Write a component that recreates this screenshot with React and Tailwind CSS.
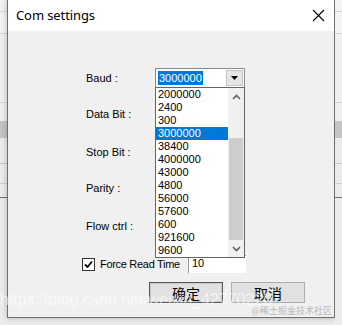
import React from "react";

const items = ["2000000","2400","300","3000000","38400","4000000","43000","4800","56000","57600","600","921600","9600"];

function Strip({ lines }) {
  return (
    <div className="w-[7px] h-full flex flex-col bg-[#ececec]">
      {lines.map((l, i) => (
        <div key={i} style={{ height: l.h }} className={l.c} />
      ))}
    </div>
  );
}

const leftLines = [
  { h: 11, c: "bg-[#f3f3f3]" },
  { h: 1, c: "bg-[#d6d6d6]" },
  { h: 21, c: "bg-[#f3f3f3]" },
  { h: 1, c: "bg-[#d6d6d6]" },
  { h: 68, c: "bg-[#f0f0f0]" },
  { h: 1, c: "bg-[#d4d4d4]" },
  { h: 18, c: "bg-[#efefef]" },
  { h: 17, c: "bg-[#c4c4c4]" },
  { h: 25, c: "bg-[#ebebeb]" },
  { h: 1, c: "bg-[#c8c8c8]" },
  { h: 19, c: "bg-[#ebebeb]" },
  { h: 1, c: "bg-[#cfcfcf]" },
  { h: 13, c: "bg-[#ebebeb]" },
  { h: 1, c: "bg-[#6e6e6e]" },
  { h: 127, c: "bg-[#ececec]" },
];

function Label({ children }) {
  return (
    <span>
      {children}
      <span className="ml-[3px]">:</span>
    </span>
  );
}

export default function App() {
  return (
    <div className="w-[342px] h-[325px] bg-[#ececec] flex overflow-hidden relative font-['Liberation_Sans',sans-serif] text-[11px] text-black">
      <Strip lines={leftLines} />
      <div className="w-[328px] h-[318px] border-x border-b border-[#707070] bg-[#f0f0f0] flex flex-col shrink-0 shadow-[0_0_6px_rgba(0,0,0,0.25)]">
        <div className="h-[31px] bg-white flex items-center justify-between pl-[8px] pr-[9px] pt-[1px]">
          <span className="font-['Noto_Sans',sans-serif] text-[13px] text-black tracking-[-0.1px]">Com settings</span>
          <svg width="13" height="13" viewBox="0 0 13 13" className="mb-[1px]">
            <path d="M1 1 L12 12 M12 1 L1 12" stroke="#000" strokeWidth="1.1" fill="none" />
          </svg>
        </div>
        <div className="relative flex-1 flex flex-col pt-[37px] pl-[77px]">
          {/* Row 1 */}
          <div className="flex items-center h-[20px]">
            <div className="w-[70px] pl-[1px]"><Label>Baud</Label></div>
            <div className="w-[90px] h-[20px] border border-[#8a8a8a] bg-white flex items-center pl-[2px] pr-[1px] gap-[1px]">
              <div className="flex-1 h-full flex items-center">
                <span className="bg-[#0078d7] text-white px-[1px] leading-[14px]">3000000</span>
              </div>
              <div className="w-[17px] h-[16px] bg-[#e5e5e5] border border-[#c4c4c4] flex items-center justify-center">
                <svg width="7" height="4" viewBox="0 0 7 4"><path d="M0 0 H7 L3.5 4 Z" fill="#000" /></svg>
              </div>
            </div>
          </div>
          <div className="h-[20px] mt-[16px] flex items-center pl-[1px]"><Label>Data Bit</Label></div>
          <div className="h-[20px] mt-[18px] flex items-center pl-[1px]"><Label>Stop Bit</Label></div>
          <div className="h-[20px] mt-[16px] flex items-center pl-[1px]"><Label>Parity</Label></div>
          <div className="h-[20px] mt-[18px] flex items-center pl-[1px]"><Label>Flow ctrl</Label></div>
          {/* Checkbox row */}
          <div className="flex items-center h-[18px] mt-[19px] -ml-[3px]">
            <div className="w-[13px] h-[13px] border border-[#333] bg-white flex items-center justify-center">
              <svg width="9" height="9" viewBox="0 0 9 9"><path d="M1 4.5 L3.5 7 L8 1.5" stroke="#000" strokeWidth="1.8" fill="none" /></svg>
            </div>
            <span className="ml-[5px] w-[88px] tracking-[-0.3px]">Force Read Time</span>
            <div className="w-[58px] h-[18px] bg-white border-l border-t border-[#9a9a9a] pl-[3px] leading-[15px]">10</div>
          </div>
          {/* Buttons */}
          <div className="flex mt-[9px] ml-[64px] gap-[8px] font-['Noto_Sans_CJK_SC',sans-serif] text-[14px]">
            <div className="w-[74px] h-[21px] bg-[#e1e1e1] border border-[#5a5a5a] shadow-[inset_0_0_0_1px_#c8c8c8] flex items-center justify-center leading-none">确定</div>
            <div className="w-[74px] h-[21px] bg-[#e1e1e1] border border-[#adadad] flex items-center justify-center leading-none">取消</div>
          </div>

          {/* Dropdown list */}
          <div className="absolute left-[147px] top-[56px] w-[90px] h-[171px] border border-[#646464] bg-white flex">
            <div className="flex-1 flex flex-col">
              {items.map((it) => (
                <div key={it} className={`h-[13px] leading-[13px] pl-[2px] ${it === "3000000" ? "bg-[#0078d7] text-white" : ""}`}>{it}</div>
              ))}
            </div>
            <div className="w-[16px] flex flex-col bg-[#f0f0f0]">
              <div className="h-[17px] flex items-center justify-center">
                <svg width="9" height="6" viewBox="0 0 9 6"><path d="M1 5 L4.5 1.5 L8 5" stroke="#606060" strokeWidth="1.6" fill="none" /></svg>
              </div>
              <div className="h-[33px]" />
              <div className="h-[102px] mx-[1px] bg-[#cdcdcd]" />
              <div className="h-[17px] flex items-center justify-center">
                <svg width="9" height="6" viewBox="0 0 9 6"><path d="M1 1 L4.5 4.5 L8 1" stroke="#606060" strokeWidth="1.6" fill="none" /></svg>
              </div>
            </div>
          </div>

          {/* watermark */}
          <div className="absolute left-[-8px] top-[257px] text-[16px] text-white/60 font-['Liberation_Sans',sans-serif] pointer-events-none whitespace-nowrap">https://blog.csdn.net/weixin_42770220</div>
          <div className="absolute right-[2px] bottom-[0px] text-[9px] text-[#b8b8b8] font-['Noto_Sans_CJK_SC',sans-serif] pointer-events-none whitespace-nowrap">@稀土掘金技术社区</div>
        </div>
      </div>
      <Strip lines={leftLines} />
    </div>
  );
}
